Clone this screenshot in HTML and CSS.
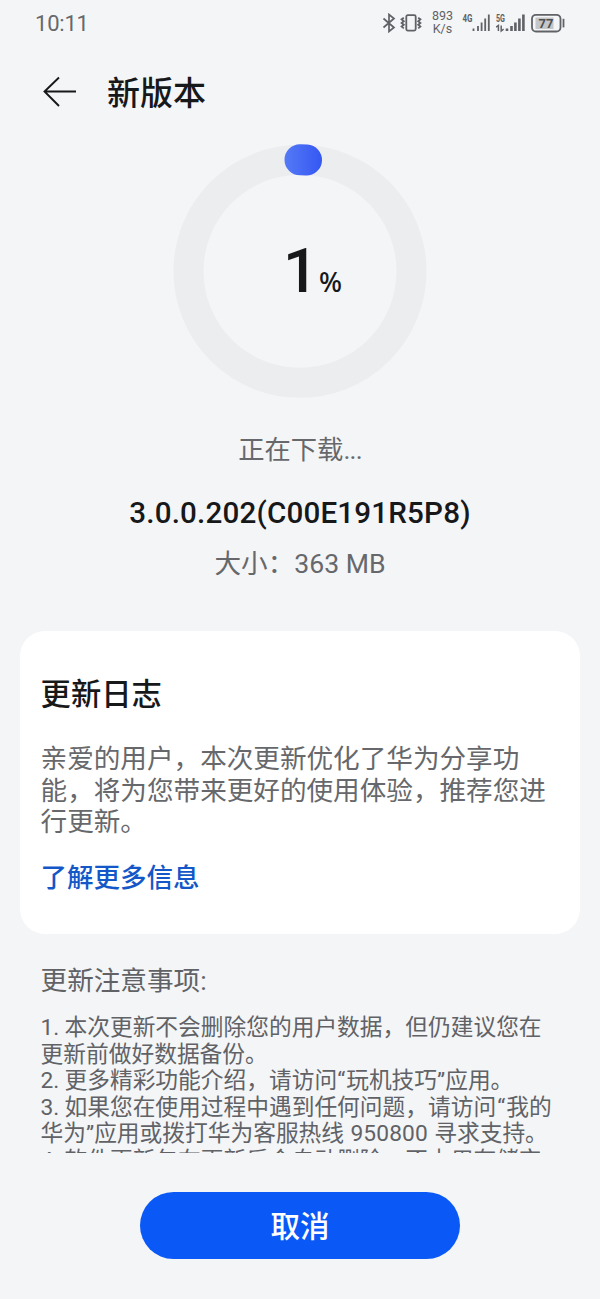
FILE: index.html
```html
<!DOCTYPE html>
<html lang="zh-CN">
<head>
<meta charset="utf-8">
<title>新版本</title>
<link rel="stylesheet" href="styles.css">
</head>
<body>
<div class="screen">
  <header class="status">
    <span class="clock">10:11</span>
    <div class="indicators">
      <svg class="i-bt" width="14" height="20" viewBox="0 0 14 20"><path d="M1.5 5.5 12 14.5 7 18.5V1.5L12 5.5 1.5 14.5"/></svg>
      <svg class="i-vib" width="22" height="18" viewBox="0 0 22 18"><rect x="6.3" y="1.2" width="9.4" height="15.4" rx="1.5"/><path d="M3.8 3.8 1.6 5.4l2.2 1.8-2.2 1.8 2.2 1.8-2.2 1.8 2.2 1.8M18.2 3.8l2.2 1.6-2.2 1.8 2.2 1.8-2.2 1.8 2.2 1.8-2.2 1.8"/></svg>
      <div class="speed"><span>893</span><span>K/s</span></div>
      <svg class="i-sig" width="28" height="20" viewBox="0 0 28 20"><text x="0.5" y="8.5" textLength="10" lengthAdjust="spacingAndGlyphs">4G</text><path d="M11.5 18v-2.5M16 18v-5M19.6 18V9.5M23.2 18V5.5M26.8 18V1.5"/></svg>
      <svg class="i-sig i-five" width="29" height="20" viewBox="0 0 29 20"><text x="0" y="8.5" textLength="9" lengthAdjust="spacingAndGlyphs">5G</text><path class="bars" d="M11 18v-2.5M15.5 18v-5M19.4 18V9.5M23.4 18V5.5M27.4 18V1.5"/><path class="updown" d="M0 14.2 2.4 12.5V18M5.2 12.5V18L7.6 16.2"/></svg>
      <svg class="i-bat" width="34" height="20" viewBox="0 0 34 20"><rect class="fill" x="4.5" y="4.5" width="18" height="11.5"/><rect class="shell" x="1" y="1.8" width="28.5" height="16.7" rx="4"/><path d="M32.5 5.8v8.6"/><text x="15" y="15">77</text></svg>
    </div>
  </header>

  <nav class="titlebar">
    <svg width="34" height="32" viewBox="0 0 34 32"><path d="M33 15.5H1.5M16 1.5 1.5 15.5 16 30"/></svg>
    <h1>新版本</h1>
  </nav>

  <section class="progress">
    <div class="ring">
      <svg width="254" height="254" viewBox="0 0 254 254">
        <defs><linearGradient id="arc" x1="111" x2="149" y1="0" y2="0" gradientUnits="userSpaceOnUse"><stop offset="0" stop-color="#557af5"/><stop offset="1" stop-color="#3557f3"/></linearGradient></defs>
        <circle class="track" cx="127" cy="127.3" r="111.5"/>
        <path class="value" d="M127 15.8A111.5 111.5 0 0 1 133.5 16"/>
      </svg>
      <div class="percent"><span class="num">1</span><span class="unit">%</span></div>
    </div>
    <p class="state">正在下载<span>...</span></p>
    <p class="version">3.0.0.202(C00E191R5P8)</p>
    <p class="size">大小：<span>363 MB</span></p>
  </section>

  <section class="card">
    <h2>更新日志</h2>
    <p class="log">亲爱的用户，本次更新优化了华为分享功<br>能，将为您带来更好的使用体验，推荐您进<br>行更新。</p>
    <a class="more">了解更多信息</a>
  </section>

  <section class="notes">
    <h3>更新注意事项:</h3>
    <p>1. 本次更新不会删除您的用户数据，但仍建议您在<br>更新前做好数据备份。<br>2. 更多精彩功能介绍，请访问<q>玩机技巧</q>应用。<br>3. 如果您在使用过程中遇到任何问题，请访问<span class="open">“</span>我的<br>华为”应用或拨打华为客服热线 <span class="phone">950800</span> 寻求支持。<br>4. 软件更新包在更新后会自动删除，不占用存储空</p>
  </section>

  <footer class="actions"><button class="cancel">取消</button></footer>
</div>
</body>
</html>
```
FILE: styles.css
```css
* { box-sizing: border-box; }
body {
  margin: 0;
  background: #f4f5f7;
  color: #17181a;
  font-family: Roboto, "Noto Sans CJK SC", sans-serif;
}
h1, h2, h3, p { margin: 0; font-weight: 400; white-space: nowrap; }
svg { display: block; flex: none; fill: none; stroke: #606266; }
.screen { width: 600px; height: 1299px; display: flex; flex-direction: column; overflow: hidden; }

.status { height: 46px; flex: none; display: flex; justify-content: space-between; padding: 0 35px; }
.clock { font-size: 22px; line-height: 47px; color: #66686b; letter-spacing: -0.2px; }
.indicators { display: flex; align-items: center; height: 45px; }
.i-bt { stroke-width: 1.7; margin-right: 4px; }
.i-vib { stroke-width: 1.8; margin-right: 9px; }
.speed { width: 23px; margin-right: 8px; display: flex; flex-direction: column; align-items: center; font-size: 12.5px; line-height: 12.6px; color: #606266; }
.i-sig { stroke-width: 1.8; margin-right: 6px; }
.i-five { stroke-width: 2.6; }
.i-sig text { font-size: 10px; font-weight: 700; fill: #606266; stroke: none; }
.i-sig .updown { stroke-width: 1.5; }
.i-bat { stroke-width: 1.8; }
.i-bat .fill { fill: #c5c6c8; stroke: none; }
.i-bat text { font-size: 13px; font-weight: 700; fill: #4e5053; stroke: none; text-anchor: middle; }

.titlebar { height: 98px; flex: none; display: flex; align-items: flex-start; padding: 30px 43px 0; gap: 30px; }
.titlebar svg { stroke: #17181a; stroke-width: 1.9; }
.titlebar h1 { font-size: 33px; line-height: 36px; font-weight: 500; }

.progress { flex: none; height: 487px; display: flex; flex-direction: column; align-items: center; }
.ring { display: grid; width: 254px; height: 254px; }
.ring > * { grid-area: 1 / 1; }
.track { stroke: #ecedef; stroke-width: 30; }
.value { stroke: url(#arc); stroke-width: 31; stroke-linecap: round; }
.percent { display: flex; align-items: baseline; padding: 92px 0 0 110px; line-height: 70px; font-weight: 500; }
.num { font-size: 62px; width: 36px; }
.unit { margin-bottom: 0; padding-bottom: 1px; font-family: "Noto Sans", sans-serif; font-size: 27px; font-weight: 500; }
.state { margin-top: 34px; font-size: 26.3px; line-height: 36px; color: #66686b; }
.state span { letter-spacing: -0.8px; }
.version { margin-top: 27px; font-size: 29.6px; line-height: 36px; font-weight: 500; letter-spacing: 0.18px; }
.size { margin-top: 15px; font-size: 26.6px; line-height: 36px; color: #66686b; }

.card { flex: none; height: 303px; margin: 0 20px; padding: 43px 20.6px 0; background: #fff; border-radius: 25px; }
.card h2 { font-size: 30.3px; line-height: 42px; font-weight: 500; }
.log { margin-top: 27px; font-size: 26.6px; line-height: 31.7px; color: #66686b; }
.more { display: block; margin-top: 22px; font-size: 26.5px; line-height: 36px; font-weight: 500; color: #1457c8; }

.notes { flex: none; height: 219px; padding: 29px 40.6px 0; overflow: hidden; color: #606266; }
.notes h3 { font-size: 26.6px; line-height: 36px; }
.notes p { margin-top: 16px; font-size: 22.72px; line-height: 26.6px; word-spacing: -0.5px; }
.notes q { quotes: "“" "”"; }
.notes q::before { padding-right: 1px; }
.open { padding: 0 1px; }
.phone { margin: 0 1.2px; letter-spacing: 0.15px; }

.actions { flex: 1; display: flex; justify-content: center; align-items: flex-start; padding-top: 39px; }
.cancel { width: 320px; height: 67px; border: 0; border-radius: 34px; padding: 4px 0 0; background: #0a59f7; color: #fff; font: 500 29.6px/63px Roboto, "Noto Sans CJK SC", sans-serif; }
```
